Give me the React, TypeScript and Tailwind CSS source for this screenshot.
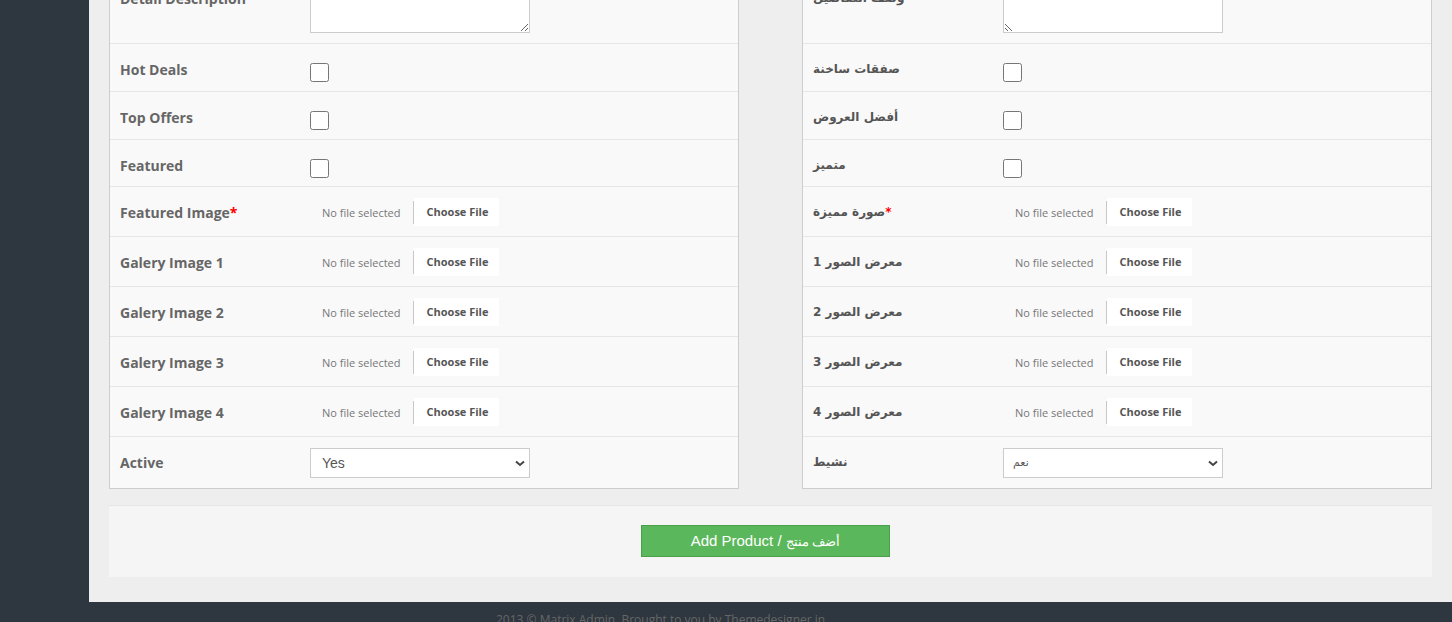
import React from "react";

type RowKind = "textarea" | "checkbox" | "file" | "select";

interface RowDef {
  label: string;
  kind: RowKind;
  h: string;
  required?: boolean;
  last?: boolean;
}

const enRows: RowDef[] = [
  { label: "Detail Description", kind: "textarea", h: "h-[75px]" },
  { label: "Hot Deals", kind: "checkbox", h: "h-[48px]" },
  { label: "Top Offers", kind: "checkbox", h: "h-[48px]" },
  { label: "Featured", kind: "checkbox", h: "h-[47px]" },
  { label: "Featured Image", kind: "file", h: "h-[50px]", required: true },
  { label: "Galery Image 1", kind: "file", h: "h-[50px]" },
  { label: "Galery Image 2", kind: "file", h: "h-[50px]" },
  { label: "Galery Image 3", kind: "file", h: "h-[50px]" },
  { label: "Galery Image 4", kind: "file", h: "h-[50px]" },
  { label: "Active", kind: "select", h: "h-[51px]", last: true },
];

const arRows: RowDef[] = [
  { label: "وصف التفاصيل", kind: "textarea", h: "h-[75px]" },
  { label: "صفقات ساخنة", kind: "checkbox", h: "h-[48px]" },
  { label: "أفضل العروض", kind: "checkbox", h: "h-[48px]" },
  { label: "متميز", kind: "checkbox", h: "h-[47px]" },
  { label: "صورة مميزة", kind: "file", h: "h-[50px]", required: true },
  { label: "معرض الصور 1", kind: "file", h: "h-[50px]" },
  { label: "معرض الصور 2", kind: "file", h: "h-[50px]" },
  { label: "معرض الصور 3", kind: "file", h: "h-[50px]" },
  { label: "معرض الصور 4", kind: "file", h: "h-[50px]" },
  { label: "نشيط", kind: "select", h: "h-[51px]", last: true },
];

function Chevron() {
  return (
    <svg
      width="10"
      height="7"
      viewBox="0 0 10 7"
      className="pointer-events-none absolute right-[5px] top-[12px]"
    >
      <path d="M1 1.5 L5 5 L9 1.5" fill="none" stroke="#444" strokeWidth="2" />
    </svg>
  );
}

function Control({ kind, rtl }: { kind: RowKind; rtl: boolean }) {
  if (kind === "textarea") {
    return (
      <div className="self-start pt-[11px]">
        <textarea
          dir={rtl ? "rtl" : "ltr"}
          className="block h-[53px] w-[220px] border border-[#cccccc] bg-white"
        />
      </div>
    );
  }
  if (kind === "checkbox") {
    return (
      <div className="self-start pt-[19px]">
        <input
          type="checkbox"
          className="m-0 block h-[19px] w-[19px]"
          readOnly
        />
      </div>
    );
  }
  if (kind === "file") {
    return (
      <div className="mt-[11px] flex h-[28px] items-center self-start">
        <span className="block h-[23px] w-[104px] border-r border-[#c8c8c8] pl-[12px] text-[11px] leading-[23px] text-[#777777] font-['Open_Sans',sans-serif]">
          No file selected
        </span>
        <span className="flex h-[28px] w-[85px] items-center justify-center bg-white pl-[2px] text-[11px] font-bold text-[#555555] font-['Open_Sans',sans-serif]">
          Choose File
        </span>
      </div>
    );
  }
  return (
    <div className="self-start pt-[11px]">
      <div className="relative h-[30px] w-[220px]">
        <select
          className={
            rtl
              ? "h-[30px] w-[220px] appearance-none border border-[#cccccc] bg-white pl-[9px] text-[11px] text-[#555555] font-['DejaVu_Sans',sans-serif]"
              : "h-[30px] w-[220px] appearance-none border border-[#cccccc] bg-white pl-[11px] text-[14px] text-[#555555] font-['Liberation_Sans',Arial,sans-serif]"
          }
          defaultValue="1"
        >
          <option value="1">{rtl ? "نعم" : "Yes"}</option>
          <option value="0">{rtl ? "لا" : "No"}</option>
        </select>
        <Chevron />
      </div>
    </div>
  );
}

function labelPad(kind: RowKind, rtl: boolean) {
  if (kind === "textarea") return rtl ? "pt-[15px]" : "pt-[17px]";
  return rtl ? "pt-[11px]" : "pt-[13px]";
}

function Panel({ rows, rtl }: { rows: RowDef[]; rtl: boolean }) {
  return (
    <div className="w-[630px] border border-[#cdcdcd] bg-[#f9f9f9]">
      {rows.map((r) => (
        <div
          key={r.label}
          className={`flex ${r.h} ${r.last ? "" : "border-b border-[#e6e6e6]"}`}
        >
          <div className={`w-[200px] shrink-0 pl-[10px] ${labelPad(r.kind, rtl)}`}>
            {rtl ? (
              <span className="text-[12px] font-bold leading-[20px] text-[#555555] font-['DejaVu_Sans',sans-serif]">
                {r.label}
                {r.required && <span className="text-[#ff0000]">*</span>}
              </span>
            ) : (
              <span className="text-[14px] font-bold leading-[20px] text-[#666666] font-['Open_Sans',sans-serif]">
                {r.label}
                {r.required && <span className="text-[#ff0000]">*</span>}
              </span>
            )}
          </div>
          <Control kind={r.kind} rtl={rtl} />
        </div>
      ))}
    </div>
  );
}

export default function App() {
  return (
    <div className="flex h-[622px] w-full flex-col overflow-hidden bg-[#2e363f]">
      <div className="flex h-[602px] shrink-0">
        <div className="w-[89px] shrink-0 bg-[#2e363f]" />
        <div className="flex-1 overflow-hidden bg-[#eeeeee] px-[20px]">
          <div className="-mt-[32px]">
            <div className="flex justify-between">
              <Panel rows={enRows} rtl={false} />
              <Panel rows={arRows} rtl={true} />
            </div>
            <div className="mt-[16px] flex h-[72px] justify-center border-t border-[#e5e5e5] bg-[#f5f5f5] pr-[10px] pt-[19px]">
              <button className="h-[32px] w-[249px] border border-[#4a9f4a] bg-[#5bb75b] text-[15px] leading-[30px] text-white font-['Liberation_Sans',Arial,sans-serif]">
                Add Product / <span className="text-[13px]">أضف منتج</span>
              </button>
            </div>
          </div>
        </div>
      </div>
      <div className="h-[20px] shrink-0 overflow-hidden bg-[#2e363f] pl-[496px] pt-[9px] text-[12px] leading-[18px] text-[#666666] font-['Open_Sans',sans-serif]">
        2013 © Matrix Admin. Brought to you by Themedesigner.in
      </div>
    </div>
  );
}
